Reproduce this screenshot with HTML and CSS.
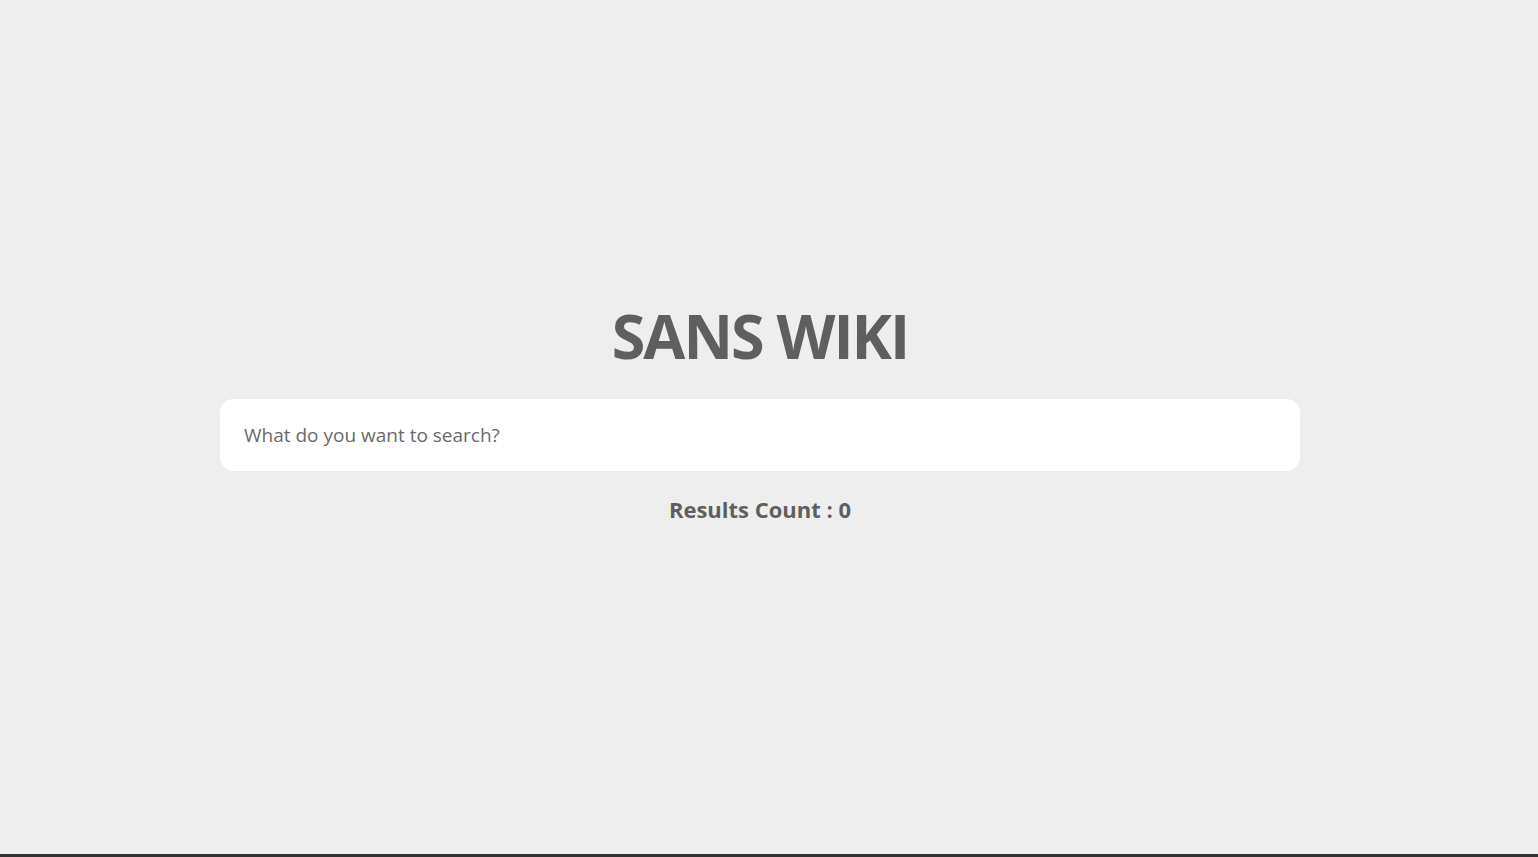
FILE: index.html
```html
<!DOCTYPE html>
<html>
<head>
<meta charset="utf-8">
<title>Sans Wiki</title>
<link rel="stylesheet" href="styles.css">
</head>
<body>
<main class="page">
  <h1 class="title">SANS WIKI</h1>
  <input class="search" type="text" placeholder="What do you want to search?">
  <p class="count">Results Count : 0</p>
</main>
<div class="bottom-bar"></div>
</body>
</html>
```
FILE: styles.css
```css
html, body {
  margin: 0;
  padding: 0;
  height: 100%;
}
body {
  background: #eeeeee;
  font-family: "Open Sans", "Noto Sans", sans-serif;
  color: #5f5f5f;
  display: flex;
  flex-direction: column;
}
.page {
  flex: 1;
  display: flex;
  flex-direction: column;
  align-items: center;
  padding-top: 296px;
  padding-right: 18px;
}
.title {
  margin: 0;
  font-size: 61px;
  font-weight: 700;
  line-height: 80px;
  letter-spacing: -2px;
}
.search {
  box-sizing: border-box;
  width: 1080px;
  height: 72px;
  margin-top: 23px;
  border: none;
  outline: none;
  border-radius: 14px;
  background: #ffffff;
  padding: 0 24px;
  font-family: inherit;
  font-size: 19px;
  color: #5f5f5f;
}
.search::placeholder {
  color: #6a6a6a;
}
.count {
  margin: 23px 0 0;
  font-size: 22px;
  font-weight: 700;
  line-height: 30px;
}
.bottom-bar {
  height: 3px;
  background: #333333;
}
```
